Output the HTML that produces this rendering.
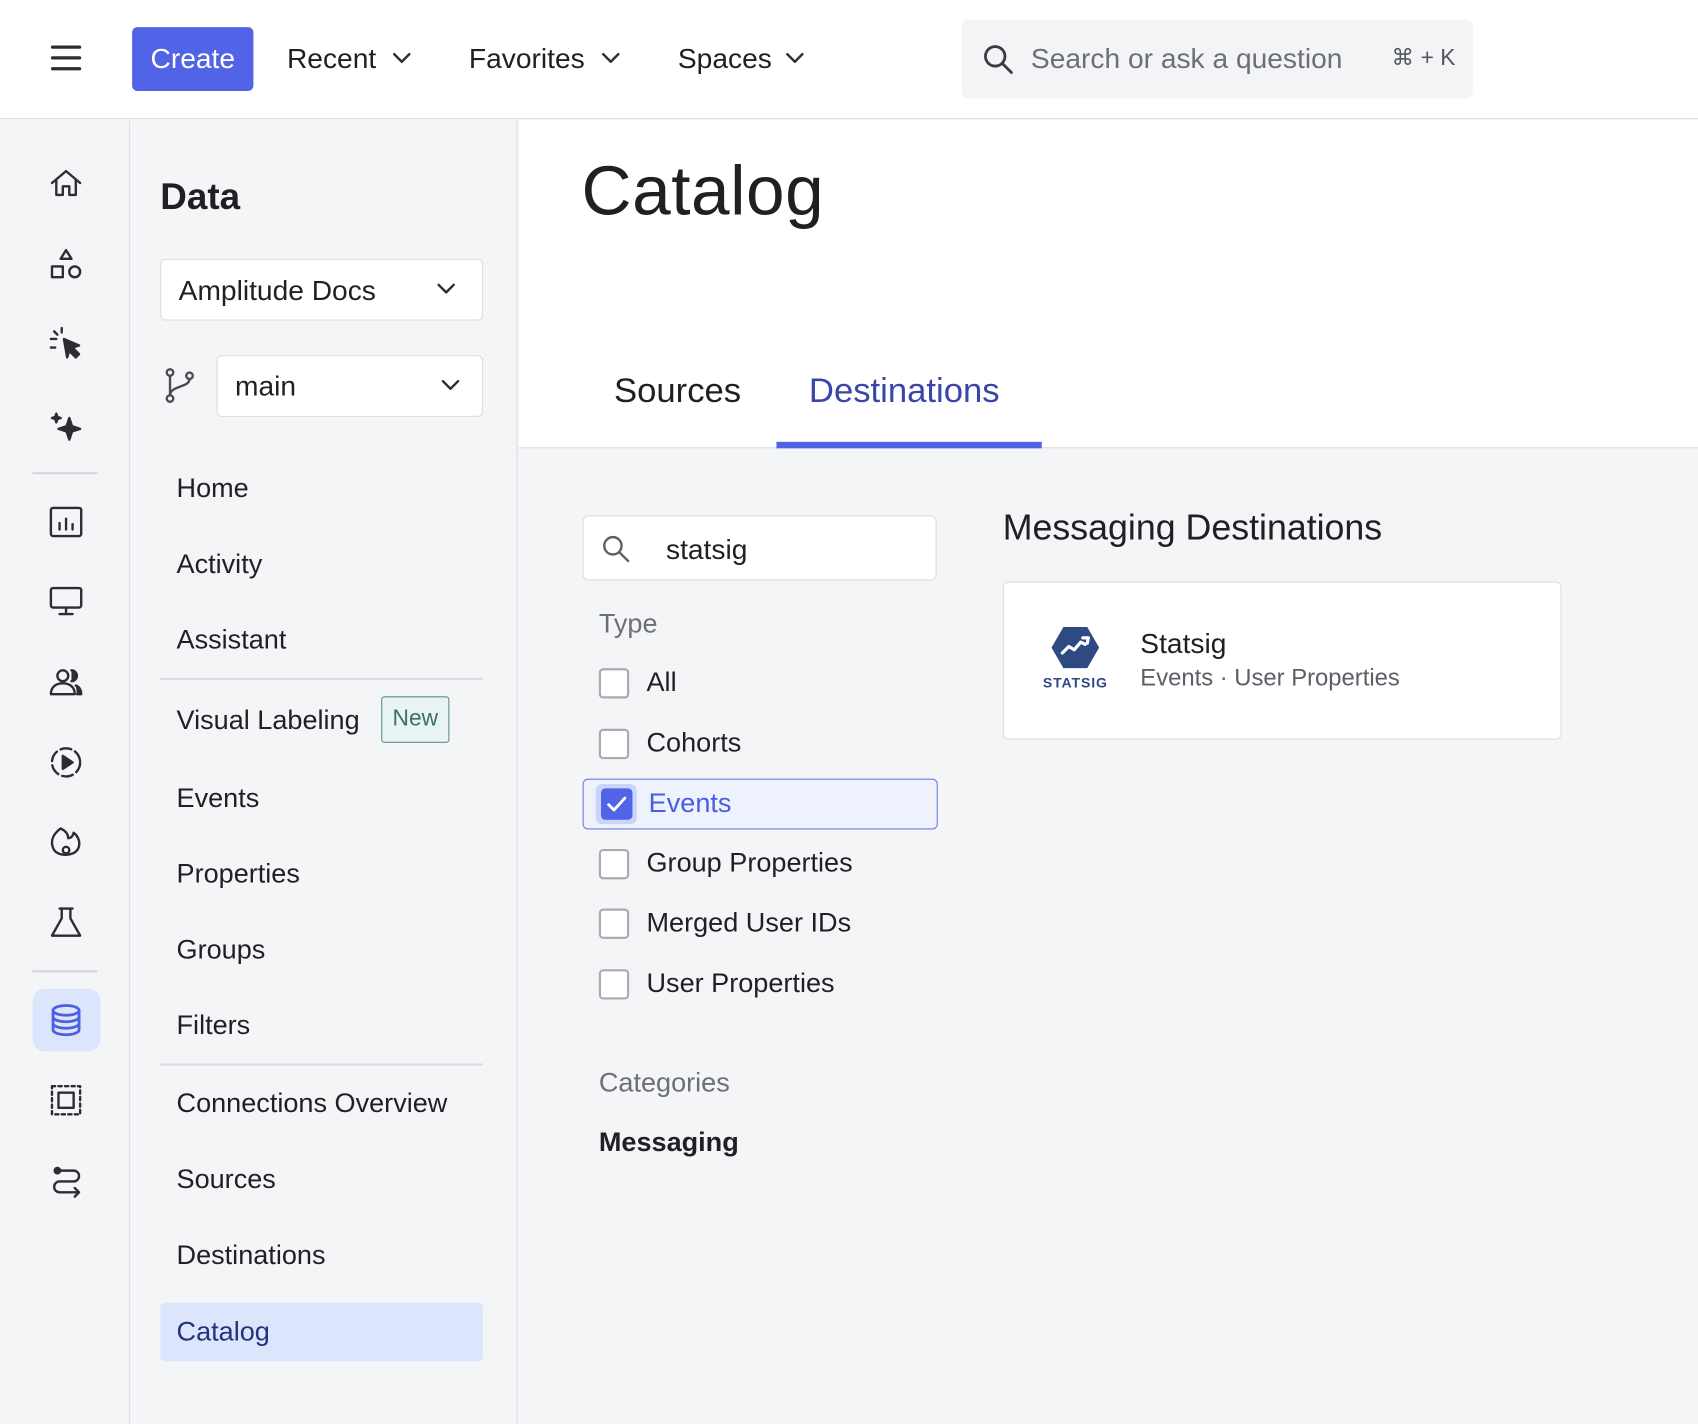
<!DOCTYPE html>
<html><head><meta charset="utf-8">
<style>
*{box-sizing:border-box;margin:0;padding:0}
html,body{width:1698px;height:1424px;overflow:hidden;background:#f4f5f7}
#w{position:absolute;left:0;top:0;width:1568px;height:1315px;transform:scale(1.08291);transform-origin:0 0;font-family:"Liberation Sans",sans-serif;color:#1f2024;background:#f4f5f7}
.a{position:absolute;white-space:nowrap}
.t{position:absolute;white-space:nowrap;height:40px;line-height:40px;font-size:25px}
svg.i{position:absolute;fill:none;stroke:#2b2d33;stroke-width:2.2;stroke-linecap:round;stroke-linejoin:round}
.cb{position:absolute;left:553px;width:28px;height:28px;border:2px solid #a9abb2;border-radius:4px;background:#fff}
.nav{position:absolute;left:163px;font-size:25px;height:40px;line-height:40px}
</style></head><body><div id="w">
<!-- top bar -->
<div class="a" style="left:0;top:0;width:1568px;height:110px;background:#fff;border-bottom:1.5px solid #dcdde1"></div>
<div class="a" style="left:47px;top:42px;width:28px;height:3px;background:#2b2d33;border-radius:2px"></div>
<div class="a" style="left:47px;top:52px;width:28px;height:3px;background:#2b2d33;border-radius:2px"></div>
<div class="a" style="left:47px;top:62px;width:28px;height:3px;background:#2b2d33;border-radius:2px"></div>
<div class="a" style="left:122px;top:25px;width:112px;height:59px;background:#5163e6;border-radius:5px;color:#fff;font-size:26px;line-height:59px;text-align:center">Create</div>
<div class="t" style="left:265px;top:34px;font-size:26px">Recent</div>
<svg class="i" style="left:361px;top:46px" width="20" height="14"><path d="M3 4l7 7 7-7"/></svg>
<div class="t" style="left:433px;top:34px;font-size:26px">Favorites</div>
<svg class="i" style="left:554px;top:46px" width="20" height="14"><path d="M3 4l7 7 7-7"/></svg>
<div class="t" style="left:626px;top:34px;font-size:26px">Spaces</div>
<svg class="i" style="left:724px;top:46px" width="20" height="14"><path d="M3 4l7 7 7-7"/></svg>
<div class="a" style="left:888px;top:18px;width:472px;height:73px;background:#f3f4f6;border-radius:7px"></div>
<svg class="i" style="left:905px;top:38px" width="34" height="34"><circle cx="14" cy="14" r="9" stroke-width="2.6" stroke="#3a3c42"/><path d="M21 21l8 8" stroke-width="2.6" stroke="#3a3c42"/></svg>
<div class="t" style="left:952px;top:34px;font-size:26px;color:#6d6f76">Search or ask a question</div>
<div class="t" style="left:1285px;top:34px;font-size:21px;color:#55575e">⌘ + K</div>
<!-- rail -->
<div class="a" style="left:0;top:111px;width:120px;height:1204px;background:#f4f5f7;border-right:1.5px solid #dcdde1"></div>
<svg class="i" style="left:44px;top:153px" width="34" height="34"><path d="M4 16L17 5l13 11M8 13v14h6v-8h6v8h6V13"/></svg>
<svg class="i" style="left:44px;top:228px" width="34" height="34"><path d="M17 3l5 8H12z"/><rect x="4" y="18" width="10" height="10"/><circle cx="25" cy="23" r="5"/></svg>
<svg class="i" style="left:44px;top:301px" width="34" height="34"><path d="M15 12l14 6-6 2 6 6-3 3-6-6-2 6z" fill="#2b2d33"/><path d="M3 12h5M6 5l3 3M13 2v4M3 20h4"/></svg>
<svg class="i" style="left:44px;top:376px" width="34" height="34"><path d="M20 10l2.5 7.5L30 20l-7.5 2.5L20 30l-2.5-7.5L10 20l7.5-2.5z" fill="#2b2d33"/><path d="M8 6l1 3 3 1-3 1-1 3-1-3-3-1 3-1z" fill="#2b2d33"/></svg>
<div class="a" style="left:30px;top:436px;width:60px;height:1.5px;background:#d6d7db"></div>
<svg class="i" style="left:44px;top:465px" width="34" height="34"><rect x="3" y="4" width="28" height="26" rx="2"/><path d="M11 24v-6M17 24v-10M23 24v-5"/></svg>
<svg class="i" style="left:44px;top:538px" width="34" height="34"><rect x="3" y="5" width="28" height="18" rx="2"/><path d="M17 23v6M11 29h12"/></svg>
<svg class="i" style="left:44px;top:613px" width="34" height="34"><circle cx="14" cy="11" r="5"/><path d="M3 28c0-7 5-10 11-10s11 3 11 10z"/><path d="M22 6a5 5 0 010 10M26 20c3 1 5 4 5 8h-4" fill="#2b2d33"/></svg>
<svg class="i" style="left:44px;top:687px" width="34" height="34"><circle cx="17" cy="17" r="13" stroke-dasharray="10 4"/><path d="M14 11v12l9-6z" fill="#2b2d33"/></svg>
<svg class="i" style="left:44px;top:761px" width="34" height="34"><path d="M12 4c-8 6-10 13-6 20 4 6 18 6 22-1 3-6 0-12-4-15-1 4-3 5-5 5 0-4-3-7-7-9z"/><circle cx="17" cy="24" r="3"/></svg>
<svg class="i" style="left:44px;top:835px" width="34" height="34"><path d="M11 4h12M13 4v9L4 29h26l-9-16V4"/></svg>
<div class="a" style="left:30px;top:896px;width:60px;height:1.5px;background:#d6d7db"></div>
<div class="a" style="left:30px;top:913px;width:63px;height:58px;background:#dce5fc;border-radius:12px"></div>
<svg class="i" style="left:44px;top:925px;stroke:#4d60e2;stroke-width:2.6" width="34" height="34"><ellipse cx="17" cy="8" rx="12" ry="4.5"/><path d="M5 8v18c0 2.5 5.5 4.5 12 4.5S29 28.5 29 26V8M5 14c0 2.5 5.5 4.5 12 4.5S29 16.5 29 14M5 20c0 2.5 5.5 4.5 12 4.5S29 22.5 29 20"/></svg>
<svg class="i" style="left:44px;top:999px" width="34" height="34"><rect x="4" y="4" width="26" height="26" stroke-dasharray="3 3"/><rect x="10" y="10" width="14" height="14"/></svg>
<svg class="i" style="left:44px;top:1073px" width="34" height="34"><circle cx="9" cy="8" r="2.5" fill="#2b2d33"/><path d="M11 8h13a5 5 0 010 10H11a5 5 0 000 10h17M25 24l4 4-4 4"/></svg>
<!-- nav panel -->
<div class="a" style="left:120px;top:111px;width:358px;height:1204px;background:#f4f5f7;border-right:1.5px solid #dcdde1"></div>
<div class="a" style="left:148px;top:160px;font-size:34px;font-weight:bold;line-height:44px">Data</div>
<div class="a" style="left:148px;top:239px;width:298px;height:57px;background:#fff;border:1.5px solid #dcdde1;border-radius:5px"></div>
<div class="t" style="left:165px;top:248px;font-size:26px">Amplitude Docs</div>
<svg class="i" style="left:402px;top:260px" width="20" height="14"><path d="M3 3l7 7 7-7"/></svg>
<svg class="i" style="left:150px;top:338px;stroke:#4a4c52" width="34" height="36"><circle cx="7" cy="6" r="3"/><circle cx="7" cy="30" r="3"/><circle cx="25" cy="9" r="3"/><path d="M7 9v18M25 12c0 8-18 6-18 15"/></svg>
<div class="a" style="left:200px;top:328px;width:246px;height:57px;background:#fff;border:1.5px solid #dcdde1;border-radius:5px"></div>
<div class="t" style="left:217px;top:336px;font-size:26px">main</div>
<svg class="i" style="left:406px;top:349px" width="20" height="14"><path d="M3 3l7 7 7-7"/></svg>
<div class="nav" style="top:431px">Home</div>
<div class="nav" style="top:501px">Activity</div>
<div class="nav" style="top:571px">Assistant</div>
<div class="a" style="left:148px;top:626px;width:298px;height:1.5px;background:#dcdde1"></div>
<div class="nav" style="top:645px">Visual Labeling</div>
<div class="a" style="left:352px;top:643px;width:63px;height:43px;background:#e8f4f2;border:1.5px solid #5b9287;border-radius:3px;color:#3c6f66;font-size:21px;line-height:40px;text-align:center">New</div>
<div class="nav" style="top:717px">Events</div>
<div class="nav" style="top:787px">Properties</div>
<div class="nav" style="top:857px">Groups</div>
<div class="nav" style="top:927px">Filters</div>
<div class="a" style="left:148px;top:982px;width:298px;height:1.5px;background:#dcdde1"></div>
<div class="nav" style="top:999px">Connections Overview</div>
<div class="nav" style="top:1069px">Sources</div>
<div class="nav" style="top:1139px">Destinations</div>
<div class="a" style="left:148px;top:1203px;width:298px;height:54px;background:#dce5fc;border-radius:4px"></div>
<div class="nav" style="top:1210px;color:#22337f">Catalog</div>
<!-- main -->
<div class="a" style="left:479px;top:111px;width:1089px;height:303px;background:#fff;border-bottom:1.5px solid #dcdde1"></div>
<div class="a" style="left:537px;top:138px;font-size:64px;line-height:76px;color:#1f2024;letter-spacing:0.5px">Catalog</div>
<div class="t" style="left:567px;top:340px;font-size:32px">Sources</div>
<div class="t" style="left:747px;top:340px;font-size:32px;color:#3946a8">Destinations</div>
<div class="a" style="left:717px;top:408px;width:245px;height:6px;background:#4f62e6"></div>
<div class="a" style="left:538px;top:476px;width:327px;height:60px;background:#fff;border:1.5px solid #dcdde1;border-radius:5px"></div>
<svg class="i" style="left:553px;top:491px;stroke:#5d5f66" width="32" height="32"><circle cx="13" cy="13" r="8"/><path d="M19 19l8 8"/></svg>
<div class="t" style="left:615px;top:487px;font-size:26px">statsig</div>
<div class="t" style="left:553px;top:556px;font-size:25px;color:#6d6f76">Type</div>
<div class="cb" style="top:617px"></div><div class="t" style="left:597px;top:610px">All</div>
<div class="cb" style="top:673px"></div><div class="t" style="left:597px;top:666px">Cohorts</div>
<div class="a" style="left:538px;top:719px;width:328px;height:47px;background:#eef2fd;border:1.5px solid #6a7ce9;border-radius:5px"></div>
<div class="a" style="left:550px;top:724px;width:38px;height:37px;background:#c9d5fb;border-radius:6px"></div>
<div class="a" style="left:555px;top:728px;width:29px;height:29px;background:#5163e6;border-radius:4px"></div>
<svg class="i" style="left:555px;top:728px;stroke:#fff;stroke-width:2.6" width="29" height="29"><path d="M7 15l5 5 10-11"/></svg>
<div class="t" style="left:599px;top:722px;color:#4a5ce0">Events</div>
<div class="cb" style="top:784px"></div><div class="t" style="left:597px;top:777px">Group Properties</div>
<div class="cb" style="top:839px"></div><div class="t" style="left:597px;top:832px">Merged User IDs</div>
<div class="cb" style="top:895px"></div><div class="t" style="left:597px;top:888px">User Properties</div>
<div class="t" style="left:553px;top:980px;color:#6d6f76">Categories</div>
<div class="t" style="left:553px;top:1035px;font-weight:bold">Messaging</div>
<div class="a" style="left:926px;top:465px;font-size:33px;line-height:44px">Messaging Destinations</div>
<div class="a" style="left:926px;top:537px;width:516px;height:146px;background:#fff;border:1.5px solid #dcdde1;border-radius:5px"></div>
<svg class="a" style="left:970px;top:577px" width="46" height="42"><path d="M12 2h22l11 19-11 19H12L1 21z" fill="#2f4a82"/><path d="M11 26l6-6 5 3 6-7 4 2M30 12l5 0-1 5" fill="none" stroke="#fff" stroke-width="3" stroke-linecap="round" stroke-linejoin="round"/></svg>
<div class="a" style="left:963px;top:623px;font-size:13px;font-weight:bold;color:#2f4a82;letter-spacing:0.8px">STATSIG</div>
<div class="t" style="left:1053px;top:574px;font-size:26px">Statsig</div>
<div class="t" style="left:1053px;top:606px;font-size:22px;color:#5d5f66">Events · User Properties</div>
</div></body></html>
